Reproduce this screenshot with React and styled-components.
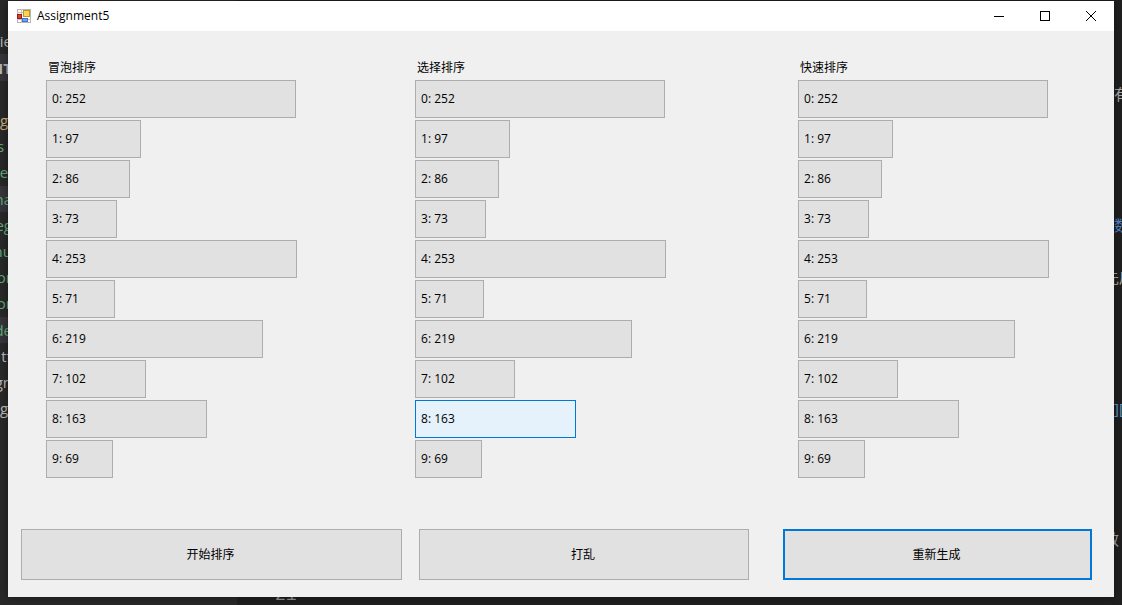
import React from "react";
import styled, { createGlobalStyle } from "styled-components";

const GlobalStyle = createGlobalStyle`
  * { box-sizing: border-box; }
  body { margin: 0; background: #242424; }
  button { font: inherit; color: inherit; }
`;

const Desktop = styled.div`
  display: grid;
  grid-template-columns: 8px minmax(0, 1fr) 8px;
  min-height: 100vh;
  overflow: hidden;
  background: linear-gradient(90deg, #282828 0 237px, #1f1f1f 237px);
  font: 12px/16px "Open Sans", "Noto Sans CJK SC", sans-serif;
  color: #000;
`;

const EditorEdge = styled.div`
  display: grid;
  grid-template-columns: minmax(0, 1fr);
  grid-template-rows: repeat(23, minmax(0, 1fr));
  padding-top: 2px;
  overflow: hidden;
  font-size: 15px;
`;

const CodeLine = styled.div`
  display: flex;
  align-items: center;
  justify-content: ${(p) => p.$side};
  margin-right: ${(p) => (p.$side === "flex-end" ? "-4px" : "0")};
  margin-left: ${(p) => (p.$scrolled ? "-10px" : "0")};
  white-space: pre;
  color: ${(p) => p.$color};
  background: ${(p) => (p.$marked ? "#35353a" : "transparent")};
  font-weight: ${(p) => (p.$bold ? 700 : 400)};
`;

const Middle = styled.div`
  display: flex;
  flex-direction: column;
  padding-top: 1px;
`;

const Window = styled.main`
  flex: 1;
  display: flex;
  flex-direction: column;
  background: #f0f0f0;
  box-shadow: 0 0 8px rgba(0, 0, 0, 0.4);
  z-index: 1;
`;

const StatusEdge = styled.div`
  display: flex;
  align-items: flex-end;
  height: 8px;
  padding: 0 0 1px 267px;
  overflow: hidden;
  color: #909090;
  font: 18px/18px "Liberation Mono", monospace;
`;

const TitleBar = styled.header`
  display: flex;
  align-items: center;
  height: 30px;
  padding-left: 9px;
  background: #fff;
`;

const Title = styled.h1`
  flex: 1;
  margin: 0 0 0 6px;
  font-size: 12px;
  font-weight: 400;
`;

const CaptionButton = styled.button`
  display: grid;
  place-items: center;
  width: 46px;
  height: 30px;
  padding: 0;
  border: 0;
  background: transparent;
`;

const Columns = styled.div`
  display: grid;
  grid-template-columns: 369fr 383fr 316fr;
  padding: 27px 0 0 38px;
`;

const Column = styled.section`
  display: flex;
  flex-direction: column;
  align-items: flex-start;
  gap: 2px;
`;

const ColumnTitle = styled.h2`
  margin: 0;
  padding-left: 2px;
  font-size: 12px;
  font-weight: 400;
  line-height: 20px;
`;

const Bar = styled.button`
  height: 38px;
  padding: 0 5px;
  text-align: left;
  border: 1px solid ${(p) => (p.$hot ? "#0078d7" : "#adadad")};
  background: ${(p) => (p.$hot ? "#e5f1fb" : "#e1e1e1")};
`;

const Actions = styled.footer`
  display: grid;
  grid-template-columns: 381fr 17px 330fr 34px 309fr;
  margin-top: auto;
  padding: 0 22px 17px 13px;
`;

const ActionButton = styled.button`
  grid-column: ${(p) => p.$column};
  height: 51px;
  padding: 0 2px 0 0;
  border: ${(p) => (p.$default ? "2px solid #0078d7" : "1px solid #adadad")};
  background: #e1e1e1;
`;

const values = [252, 97, 86, 73, 253, 71, 219, 102, 163, 69];

const columns = [
  { title: "冒泡排序" },
  { title: "选择排序", hot: 8 },
  { title: "快速排序" },
];

const leftCode = {
  1: { text: "vie", color: "#b8b8b8" },
  2: { text: "NT", color: "#b8b8b8", marked: true, bold: true },
  4: { text: "g ", color: "#c8ab78" },
  5: { text: "s  ", color: "#62a878" },
  6: { text: "e ", color: "#62a878" },
  7: { text: "ha", color: "#62a878", marked: true },
  8: { text: "eg", color: "#62a878" },
  9: { text: "nu", color: "#62a878" },
  10: { text: "or", color: "#62a878" },
  11: { text: "or", color: "#62a878" },
  12: { text: "de", color: "#62a878", marked: true },
  13: { text: "tt", color: "#b8b8b8" },
  14: { text: "gn", color: "#b8b8b8" },
  15: { text: "g ", color: "#b8b8b8" },
};

const rightCode = {
  3: { text: "有", color: "#a8a8a8" },
  8: { text: "数", color: "#4f86c6" },
  10: { text: "先后", color: "#a8a8a8", scrolled: true },
  15: { text: "][", color: "#5b9bc8" },
  20: { text: "效", color: "#a8a8a8", scrolled: true },
};

function Edge({ lines, side }) {
  return (
    <EditorEdge>
      {Array.from({ length: 23 }, (_, i) => {
        const line = lines[i] || {};
        return (
          <CodeLine
            key={i}
            $side={side}
            $color={line.color}
            $marked={line.marked}
            $bold={line.bold}
            $scrolled={line.scrolled}
          >
            {line.text}
          </CodeLine>
        );
      })}
    </EditorEdge>
  );
}

function AppIcon() {
  return (
    <svg width="14" height="14" viewBox="0 0 14 14" aria-hidden="true">
      <rect x="0.5" y="0.5" width="13" height="13" fill="#fff" stroke="#b5b5b5" />
      <path d="M4.5 0v14M0 3.5h6M0 10.5h14" stroke="#c4c4c4" fill="none" />
      <rect x="0.5" y="5.5" width="4" height="4" fill="#d8402f" stroke="#9b1c16" />
      <rect x="6.5" y="1.5" width="6" height="6" fill="#ffd45a" stroke="#c49418" />
      <rect x="5.5" y="9.5" width="5" height="3" fill="#6fa4f2" stroke="#3f74cc" />
    </svg>
  );
}

export default function App() {
  return (
    <Desktop>
      <GlobalStyle />
      <Edge lines={leftCode} side="flex-end" />
      <Middle>
        <Window>
          <TitleBar>
            <AppIcon />
            <Title>Assignment5</Title>
            <CaptionButton aria-label="最小化">
              <svg width="10" height="10"><path d="M0 5.5h10" stroke="#000" /></svg>
            </CaptionButton>
            <CaptionButton aria-label="最大化">
              <svg width="10" height="10"><rect x="0.5" y="0.5" width="9" height="9" fill="none" stroke="#000" /></svg>
            </CaptionButton>
            <CaptionButton aria-label="关闭">
              <svg width="10" height="10"><path d="M0 0L10 10M10 0L0 10" stroke="#000" /></svg>
            </CaptionButton>
          </TitleBar>
          <Columns>
            {columns.map((column) => (
              <Column key={column.title}>
                <ColumnTitle>{column.title}</ColumnTitle>
                {values.map((value, i) => (
                  <Bar key={i} $hot={column.hot === i} style={{ width: value - 2 }}>
                    {i}: {value}
                  </Bar>
                ))}
              </Column>
            ))}
          </Columns>
          <Actions>
            <ActionButton $column={1}>开始排序</ActionButton>
            <ActionButton $column={3}>打乱</ActionButton>
            <ActionButton $column={5} $default>重新生成</ActionButton>
          </Actions>
        </Window>
        <StatusEdge>21</StatusEdge>
      </Middle>
      <Edge lines={rightCode} side="flex-start" />
    </Desktop>
  );
}
